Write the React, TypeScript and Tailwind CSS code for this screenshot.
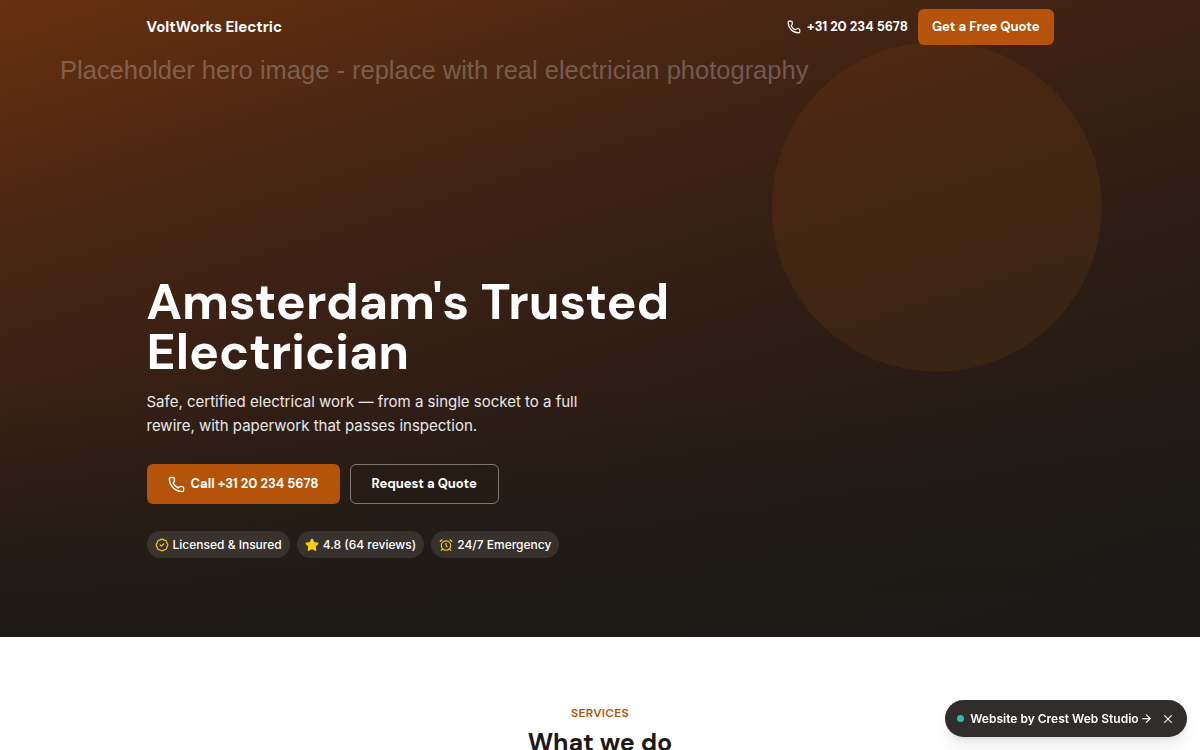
import { AlarmClock, BadgeCheck, Phone, Star, X } from "lucide-react";

const display = "font-['DM_Sans',Inter,sans-serif]";
const pill = "flex h-[27px] items-center gap-1 rounded-full bg-white/10 px-2 text-[12px] leading-4 font-medium text-white";

function HeroArt() {
  return (
    <svg className="absolute inset-0 h-full w-full" viewBox="0 0 1600 900" preserveAspectRatio="xMidYMid slice" aria-hidden="true">
      <defs>
        <linearGradient id="glow" gradientUnits="userSpaceOnUse" x1="0" y1="25" x2="376" y2="1244">
          <stop offset="0" stopColor="#66300f" />
          <stop offset="0.125" stopColor="#582b10" />
          <stop offset="0.27" stopColor="#472513" />
          <stop offset="0.4" stopColor="#3a2014" />
          <stop offset="0.58" stopColor="#2c1d15" />
          <stop offset="0.75" stopColor="#241b16" />
          <stop offset="1" stopColor="#1c1917" />
        </linearGradient>
        <linearGradient id="fade" x1="0" y1="0" x2="0" y2="1">
          <stop offset="0.6" stopColor="#1c1a17" stopOpacity="0" />
          <stop offset="0.97" stopColor="#1c1a17" stopOpacity="0.8" />
        </linearGradient>
      </defs>
      <rect width="1600" height="900" fill="url(#glow)" />
      <circle cx="1249" cy="301" r="220" fill="#b45309" fillOpacity="0.13" />
      <rect width="1600" height="900" fill="url(#fade)" />
      <text x="80" y="131" fontSize="34" fill="#ffffff" fillOpacity="0.26" fontFamily="Liberation Sans, sans-serif">
        Placeholder hero image - replace with real electrician photography
      </text>
    </svg>
  );
}

export default function App() {
  return (
    <div className="relative h-screen overflow-hidden bg-white font-['Inter',sans-serif]">
      <section className="relative flex min-h-[637px] flex-col overflow-hidden bg-[#1c1917]">
        <HeroArt />
        <header className="relative mx-auto flex h-[53px] w-full max-w-[907px] items-center justify-between text-white">
          <a href="#top" className={`${display} text-[15px] leading-6 font-bold`}>VoltWorks Electric</a>
          <nav className="flex items-center gap-[10px]">
            <a href="tel:+31202345678" className={`${display} flex items-center gap-[6px] text-[13px] font-bold`}>
              <Phone size={14} strokeWidth={2} aria-hidden="true" />
              +31 20 234 5678
            </a>
            <a href="#quote" className={`${display} flex h-9 items-center rounded-md bg-[#b45309] px-[14px] text-[13px] font-bold`}>
              Get a Free Quote
            </a>
          </nav>
        </header>
        <div className="relative mx-auto mt-auto w-full max-w-[907px] pb-[79px]">
          <h1 className={`${display} max-w-[600px] text-[50px] leading-[50px] font-bold text-white`}>Amsterdam's Trusted Electrician</h1>
          <p className="mt-[13px] max-w-[450px] text-[15px] leading-6 text-white/90">
            Safe, certified electrical work — from a single socket to a full rewire, with paperwork that passes inspection.
          </p>
          <div className="mt-[26px] flex gap-[10px]">
            <a href="tel:+31202345678" className={`${display} flex h-10 items-center gap-[6px] rounded-md bg-[#b45309] px-[21px] text-[13px] font-bold text-white`}>
              <Phone size={17} strokeWidth={2} aria-hidden="true" />
              Call +31 20 234 5678
            </a>
            <a href="#quote" className={`${display} flex h-10 items-center rounded-md border border-white/40 px-[21px] text-[13px] font-bold text-white`}>
              Request a Quote
            </a>
          </div>
          <ul className="mt-[27px] flex gap-[7px]">
            <li className={pill}><BadgeCheck size={14} strokeWidth={2} className="text-[#facc15]" aria-hidden="true" />Licensed &amp; Insured</li>
            <li className={pill}><Star size={14} strokeWidth={2} className="fill-[#facc15] text-[#facc15]" aria-hidden="true" />4.8 (64 reviews)</li>
            <li className={pill}><AlarmClock size={14} strokeWidth={2} className="text-[#facc15]" aria-hidden="true" />24/7 Emergency</li>
          </ul>
        </div>
      </section>
      <section className={`${display} pt-[68px] text-center`}>
        <p className="text-[12px] leading-4 font-semibold tracking-wide text-[#b45309]">SERVICES</p>
        <h2 className="mt-[6px] text-[25px] leading-8 font-bold text-[#1c1917]">What we do</h2>
      </section>
      <aside className="fixed right-[13px] bottom-[13px] flex h-[37px] items-center gap-[10px] rounded-full bg-[#302d2c] px-3 text-white shadow-lg">
        <a href="#studio" className="flex items-center gap-[6px] text-[12px] font-semibold">
          <span className="size-[7px] rounded-full bg-[#2dbdb6]" />
          <span>Website by Crest Web Studio <span className="font-['DM_Sans',sans-serif] font-medium">→</span></span>
        </a>
        <button type="button" aria-label="Dismiss" className="text-white/80"><X size={14} strokeWidth={2} /></button>
      </aside>
    </div>
  );
}
